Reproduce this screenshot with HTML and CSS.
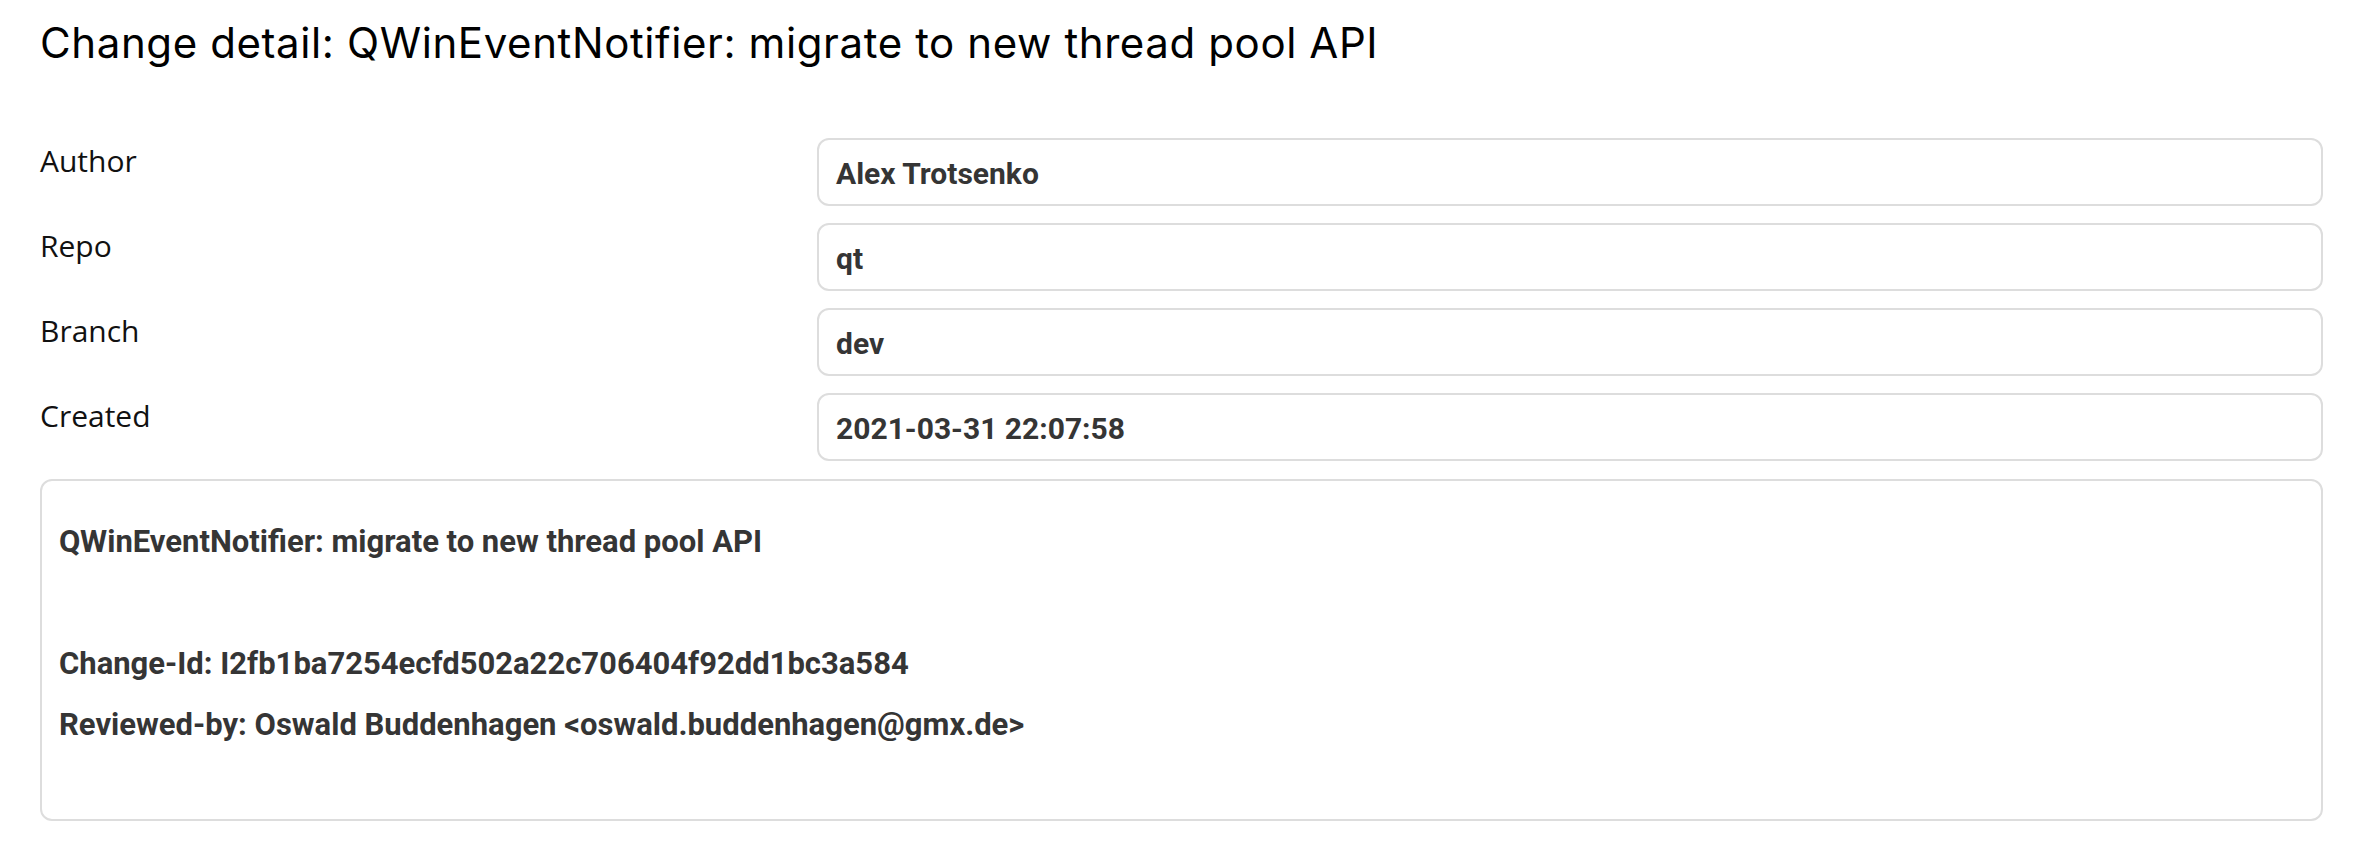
FILE: index.html
```html
<!DOCTYPE html>
<html lang="en">
<head>
<meta charset="utf-8">
<title>Change detail</title>
<link rel="stylesheet" href="styles.css">
</head>
<body>
<main class="page">
  <h1 class="title">Change detail: QWinEventNotifier: migrate to new thread pool API</h1>
  <div class="fields">
    <div class="label">Author</div>
    <div class="value">Alex Trotsenko</div>
    <div class="label">Repo</div>
    <div class="value">qt</div>
    <div class="label">Branch</div>
    <div class="value">dev</div>
    <div class="label">Created</div>
    <div class="value">2021-03-31 22:07:58</div>
  </div>
  <div class="message">
    <div class="line">QWinEventNotifier: migrate to new thread pool API</div>
    <div class="line"></div>
    <div class="line">Change-Id: I2fb1ba7254ecfd502a22c706404f92dd1bc3a584</div>
    <div class="line">Reviewed-by: Oswald Buddenhagen &lt;oswald.buddenhagen@gmx.de&gt;</div>
  </div>
</main>
</body>
</html>
```

FILE: styles.css
```css
html, body {
  margin: 0;
  padding: 0;
  background: #ffffff;
}

.page {
  padding: 19px 47px 0 40px;
}

.title {
  margin: 0 0 71px 0;
  font-family: Inter, "Liberation Sans", sans-serif;
  font-weight: 400;
  font-size: 42px;
  letter-spacing: 0.6px;
  line-height: 48px;
  color: #000000;
}

.fields {
  display: grid;
  grid-template-columns: 777px 1fr;
  row-gap: 17px;
}

.label {
  font-family: "Open Sans", sans-serif;
  font-size: 30px;
  line-height: 1.5;
  color: #111111;
}

.value {
  border: 2px solid #dddddd;
  border-radius: 12px;
  padding: 3px 17px 0 17px;
  height: 61px;
  line-height: 61px;
  font-family: Roboto, sans-serif;
  font-weight: 700;
  font-size: 30px;
  color: #353535;
}

.message {
  margin-top: 18px;
  border: 2px solid #dddddd;
  border-radius: 12px;
  padding: 30px 17px 64px 17px;
  font-family: Roboto, sans-serif;
  font-weight: 700;
  font-size: 31px;
  color: #353535;
}

.line {
  height: 61px;
  line-height: 61px;
}
```
